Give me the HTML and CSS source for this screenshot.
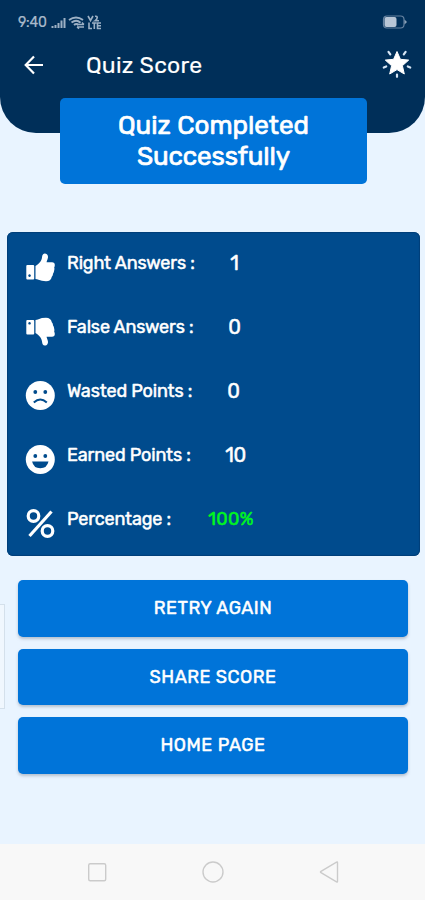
FILE: index.html
```html
<!DOCTYPE html>
<html lang="en">
<head>
<meta charset="utf-8">
<title>Quiz Score</title>
<link rel="stylesheet" href="styles.css">
</head>
<body>
<div class="screen">
  <header class="header">
    <div class="status">
      <span class="time">9:40</span>
      <svg class="signals" width="52" height="16" viewBox="0 0 52 16" fill="none" stroke="#9db1c5">
        <path d="M1.500 13v-2M4.500 13v-3M7.500 13V8M10.500 13V5.500M13.500 13V3" stroke-width="2"/>
        <path d="M18 5q7-5 14 0M20.500 7.600q5-3.600 9 .2M23 10q2.500-2 4.500 0" stroke-width="1.900"/>
        <path d="M26 9.500h7m-2-2 2 2M33 12h-7m2 1.700L26 12" stroke-width="1.400"/>
        <path d="M37 1l2.500 4.500L42 1M44 1.300c3-.5 3 2.500 0 4.500h4M38 7.500v6h3M41 8h4.500M43.300 8v6M50 8h-3.500v5.500H50M46.500 10.700H50" stroke-width="1.600"/>
      </svg>
      <svg class="battery" width="26" height="14" viewBox="0 0 26 14">
        <rect x="1.500" y="1" width="20.500" height="12" rx="3.500" fill="none" stroke="#6582a0" stroke-width="1.200"/>
        <rect x="2.500" y="2" width="12" height="10" rx="2" fill="#b8c6d6"/>
        <path d="M22.500 4.500 25 7l-2.500 2.500z" fill="#8ba1b8"/>
      </svg>
    </div>
    <div class="appbar">
      <svg class="back" width="20" height="20" viewBox="0 0 20 20" fill="none" stroke="#fff" stroke-width="2.200"><path d="M19 10H2M10 1.500 1.700 10 10 18.500"/></svg>
      <h1 class="title">Quiz Score</h1>
      <svg class="star" width="30" height="30" viewBox="0 0 30 30">
        <path fill="#fff" stroke="#fff" stroke-width="1" stroke-linejoin="round" d="m15 2.500 3.400 7.800 8.300.8-6.300 5.600 1.900 8.300-7.300-4.400L7.700 25l1.900-8.300-6.300-5.600 8.300-.8z"/>
        <path fill="none" stroke="#d7e6f5" stroke-width="2.200" stroke-linecap="round" d="m6.500 2.800 1.800 2.500M23.600 2.800l-1.800 2.500M1.800 18.500l2.400-1M28.200 18.500l-2.400-1M15 25.500v2.300"/>
      </svg>
    </div>
  </header>
  <main class="content">
    <section class="banner"><span class="line-one">Quiz Completed</span><span class="line-two">Successfully</span></section>
    <section class="results">
      <div class="row">
        <svg class="icon" width="30" height="30" viewBox="0 0 30 30"><path fill="#fff" fill-rule="evenodd" d="M2.300 12h5.900q1 0 1 1v12.500q0 1-1 1H2.300q-1 0-1-1V13q0-1 1-1zM4.500 21.300a1.300 1.300 0 1 0 .1 0z"/><path fill="#fff" d="M10.500 13c3-2 6-4.500 6.500-8.500.3-2.500 1-4 2.800-4 2.500 0 3.700 2.300 3 4.800-.4 1.800-1.200 3-1.200 4H27q2.800 0 2.800 2.600 0 1.700-.6 2.400.5 1.500-.1 3.400-.1 1.600-1 2.800-.2 2.300-1.300 3.200-.9 4.500-5.800 4.500-4.500 0-7.500-1.400-1.500-.7-3-.8z"/></svg>
        <span class="label">Right Answers :</span><span class="value">1</span>
      </div>
      <div class="row">
        <svg class="icon" width="30" height="30" viewBox="0 0 30 30"><path fill="#fff" fill-rule="evenodd" d="M2.300 3h5.900q1 0 1 1v12.500q0 1-1 1H2.300q-1 0-1-1V4q0-1 1-1zM4.500 5a1.300 1.300 0 1 0 .1 0z"/><path fill="#fff" d="M10.500 16c3 2 6 4.500 6.500 8.500.3 2.500 1 4 2.800 4 2.500 0 3.700-2.300 3-4.800-.4-1.800-1.200-3-1.200-4H27q2.800 0 2.800-2.600 0-1.700-.6-2.400.5-1.500-.1-3.400-.1-1.600-1-2.800-.2-2.300-1.300-3.200-.9-4.500-5.800-4.500-4.500 0-7.500 1.400-1.500.7-3 .8z"/></svg>
        <span class="label">False Answers :</span><span class="value">0</span>
      </div>
      <div class="row">
        <svg class="icon" width="30" height="30" viewBox="0 0 30 30"><circle cx="15.300" cy="14.500" r="14.500" fill="#fff"/><circle cx="10.300" cy="11" r="1.900" fill="#004b8d"/><circle cx="20.300" cy="11" r="1.900" fill="#004b8d"/><path d="M8.800 21.500q6.500-6 13 0" fill="none" stroke="#004b8d" stroke-width="2"/></svg>
        <span class="label">Wasted Points :</span><span class="value shifted">0</span>
      </div>
      <div class="row">
        <svg class="icon" width="30" height="30" viewBox="0 0 30 30"><circle cx="15.300" cy="14.500" r="14.500" fill="#fff"/><circle cx="10.300" cy="11" r="1.900" fill="#004b8d"/><circle cx="20.300" cy="11" r="1.900" fill="#004b8d"/><path d="M7.100 16.500h16.400q-1.500 6.800-8.200 6.800t-8.200-6.800z" fill="#004b8d"/></svg>
        <span class="label">Earned Points :</span><span class="value wide">10</span>
      </div>
      <div class="row">
        <svg class="icon" width="30" height="30" viewBox="0 0 30 30" fill="none" stroke="#fff" stroke-width="3.200"><circle cx="8.500" cy="7" r="5.300"/><circle cx="22.500" cy="22" r="5.300"/><path d="M26.500 2.500 4.500 27"/></svg>
        <span class="label">Percentage :</span><span class="value percent">100%</span>
      </div>
    </section>
    <nav class="actions">
      <button class="action">RETRY AGAIN</button>
      <button class="action">SHARE SCORE</button>
      <button class="action">HOME PAGE</button>
    </nav>
    <span class="edge-handle"></span>
  </main>
  <footer class="navbar">
    <svg width="24" height="24" viewBox="0 0 24 24"><rect x="3.700" y="3.700" width="17" height="17" rx="1.500"/></svg>
    <svg width="24" height="24" viewBox="0 0 24 24"><circle cx="12" cy="12" r="10"/></svg>
    <svg width="24" height="24" viewBox="0 0 24 24"><path d="M20.500 2.500v19q0 .8-1 .3L4 12.700q-1-.7 0-1.400l15.500-9.100q1-.5 1 .3z"/></svg>
  </footer>
</div>
</body>
</html>
```
FILE: styles.css
```css
* { box-sizing: border-box; }
body { margin: 0; font-family: "Rubik", Roboto, "Liberation Sans", sans-serif; color: #fff; }
.screen { width: 425px; height: 900px; display: flex; flex-direction: column; background: #e9f4ff; overflow: hidden; }
.header { height: 133px; flex: none; background: #002f59; border-radius: 0 0 36px 36px; }
.status { height: 43px; display: flex; align-items: center; padding: 2px 17px 0 18px; }
.time { width: 33px; font-size: 14px; letter-spacing: -.2px; color: #a9bacb; -webkit-text-stroke: .2px #a9bacb; }
.battery { margin: -2px 0 0 auto; }
.appbar { height: 44px; display: flex; align-items: center; padding: 0 13px 0 24px; }
.title { margin: -1px 0 0 42px; font-size: 23px; font-weight: 400; letter-spacing: .25px; white-space: nowrap; -webkit-text-stroke: .15px #fff; }
.star { margin: -2px 0 0 auto; }
.content { position: relative; flex: 1; display: flex; flex-direction: column; }
.banner { width: 307px; height: 86px; margin: -35px 0 0 60px; padding-top: 12px; display: flex; flex-direction: column; align-items: center; background: #0074d9; border-radius: 5px; font-size: 26px; font-weight: 400; line-height: 31px; -webkit-text-stroke: .7px #fff; }
.line-one { letter-spacing: 0; }
.line-two { letter-spacing: -.1px; }
.results { height: 324px; margin: 48px 5px 0 7px; padding-left: 18px; background: #004b8d; border-radius: 6px; box-shadow: inset 0 0 1px 1px #003f78; }
.row { height: 64px; display: grid; grid-template-columns: 30px 128px 79px; column-gap: 12px; align-items: center; }
.icon { margin-top: 7px; }
.label { margin-top: -2px; font-size: 18px; font-weight: 400; letter-spacing: -.15px; white-space: nowrap; -webkit-text-stroke: .5px #fff; }
.value { width: 79px; margin-top: -2px; padding-right: 24px; font-size: 20px; font-weight: 400; text-align: center; -webkit-text-stroke: .5px currentColor; }
.shifted { padding-right: 26px; }
.wide { padding-right: 22px; letter-spacing: -.5px; }
.percent { color: #00f81c; font-size: 18px; padding-right: 31px; letter-spacing: .3px; }
.actions { margin: 24px 17px 0 18px; display: flex; flex-direction: column; gap: 12px; }
.action { height: 56.700px; padding: 0 0 1px; border: 0; border-radius: 5px; background: #0074d9; color: #fff; font-family: inherit; font-size: 18px; font-weight: 400; letter-spacing: .5px; -webkit-text-stroke: .5px #fff; box-shadow: 0 2px 3px #8795a688; }
.edge-handle { position: absolute; left: -2px; top: 471px; width: 7px; height: 105px; border: 1px solid #d4e0eb; background: #f0f7fe; }
.navbar { height: 56px; flex: none; display: flex; justify-content: space-between; align-items: center; padding: 0 84px 0 85px; background: #f8f8f8; }
.navbar svg { fill: none; stroke: #cbcbcb; stroke-width: 1.400px; }
```
